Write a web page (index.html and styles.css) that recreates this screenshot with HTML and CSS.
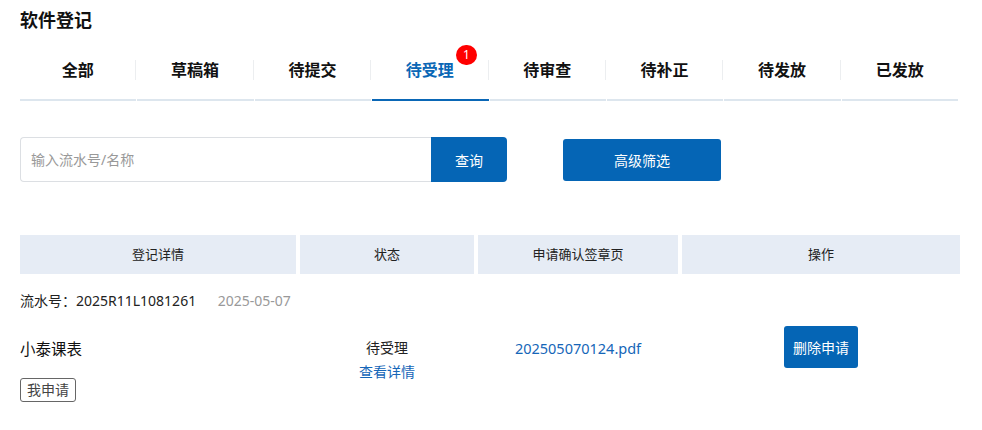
FILE: index.html
```html
<!DOCTYPE html>
<html lang="zh-CN">
  <head>
    <meta charset="UTF-8" />
    <meta name="viewport" content="width=device-width, initial-scale=1.0" />
    <title>软件登记</title>
    <link rel="stylesheet" href="styles.css">
  </head>
  <body>
    <div class="main">
      <h1 class="title">软件登记</h1>

      <div class="tabs">
        <div class="tab"><span class="tab-label">全部</span></div>
        <div class="tab"><span class="tab-label">草稿箱</span></div>
        <div class="tab"><span class="tab-label">待提交</span></div>
        <div class="tab active">
          <span class="tab-label"><span class="tab-text">待受理<span class="badge">1</span></span></span>
        </div>
        <div class="tab"><span class="tab-label">待审查</span></div>
        <div class="tab"><span class="tab-label">待补正</span></div>
        <div class="tab"><span class="tab-label">待发放</span></div>
        <div class="tab last"><span class="tab-label">已发放</span></div>
      </div>

      <div class="search-bar">
        <div class="search">
          <input class="search-input" type="text" placeholder="输入流水号/名称" />
          <button class="search-button">查询</button>
        </div>
        <button class="filter-button">高级筛选</button>
      </div>

      <div class="table-head">
        <div class="head-cell">登记详情</div>
        <div class="head-cell">状态</div>
        <div class="head-cell">申请确认签章页</div>
        <div class="head-cell">操作</div>
      </div>

      <div class="record">
        <div class="record-meta">
          <span>流水号：2025R11L1081261</span>
          <span class="record-date">2025-05-07</span>
        </div>
        <div class="record-body">
          <div class="cell cell-detail">
            <div class="record-name">小泰课表</div>
            <span class="tag">我申请</span>
          </div>
          <div class="cell cell-status">
            <div>待受理</div>
            <a class="link" href="#">查看详情</a>
          </div>
          <div class="cell cell-file">
            <a class="link" href="#">202505070124.pdf</a>
          </div>
          <div class="cell cell-action">
            <button class="delete-button">删除申请</button>
          </div>
        </div>
      </div>
    </div>
  </body>
</html>
```

FILE: styles.css
```css
body {
  margin: 0;
  font-family: "Noto Sans", "Noto Sans CJK SC", sans-serif;
  color: #333;
  background: #fff;
}

.main {
  padding: 8px 22px 0 20px;
}

.title {
  margin: 0;
  font-size: 18px;
  line-height: 24px;
  font-weight: bold;
  color: #111;
}

/* tabs */
.tabs {
  display: flex;
  width: 938px;
  margin-top: 12px;
}

.tab {
  flex: 1;
  padding: 16px 0 19px 0;
  border-bottom: 2px solid #dde6ee;
  margin-right: 1px;
}

.tab.last {
  margin-right: 0;
}

.tab-label {
  display: block;
  text-align: center;
  font-size: 16px;
  font-weight: bold;
  line-height: 20px;
  color: #111;
  border-right: 1px solid #eceef0;
}

.tab.last .tab-label {
  border-right: none;
}

.tab.active {
  border-bottom-color: #0a67b6;
}

.tab.active .tab-label {
  color: #0a67b6;
}

.tab-text {
  position: relative;
}

.badge {
  position: absolute;
  left: 100%;
  top: -14px;
  margin-left: 2px;
  width: 21px;
  height: 20px;
  border-radius: 10px;
  background: #f00;
  color: #fff;
  font-size: 12px;
  font-weight: normal;
  line-height: 20px;
  text-align: center;
}

/* search */
.search-bar {
  display: flex;
  align-items: center;
  margin-top: 36px;
}

.search {
  display: flex;
}

.search-input {
  width: 411px;
  height: 45px;
  box-sizing: border-box;
  border: 1px solid #dcdfe3;
  border-right: none;
  border-radius: 4px 0 0 4px;
  padding: 0 10px;
  font-family: inherit;
  font-size: 14px;
  color: #333;
  outline: none;
}

.search-input::placeholder {
  color: #999;
}

.search-button {
  width: 76px;
  height: 45px;
  border: none;
  border-radius: 0 4px 4px 0;
  background: #0565b5;
  color: #fff;
  font-family: inherit;
  font-size: 14px;
}

.filter-button {
  margin-left: 56px;
  width: 158px;
  height: 42px;
  border: none;
  border-radius: 3px;
  background: #0565b5;
  color: #fff;
  font-family: inherit;
  font-size: 14px;
}

/* table */
.table-head,
.record-body {
  display: grid;
  grid-template-columns: 276px 174px 200px 278px;
  column-gap: 4px;
}

.table-head {
  margin-top: 53px;
}

.head-cell {
  height: 39px;
  line-height: 39px;
  text-align: center;
  background: #e6ecf5;
  font-size: 13px;
  color: #222;
}

.record-meta {
  margin-top: 18px;
  font-size: 14px;
  line-height: 18px;
  color: #222;
}

.record-date {
  margin-left: 18px;
  color: #999;
}

.cell {
  font-size: 14px;
  line-height: 24px;
}

.cell-detail {
  padding-top: 28px;
}

.record-name {
  font-size: 15.5px;
  line-height: 22px;
  color: #111;
}

.tag {
  display: inline-block;
  margin-top: 18px;
  padding: 0 6px;
  height: 22px;
  line-height: 22px;
  border: 1px solid #666;
  border-radius: 3px;
  font-size: 14px;
  color: #444;
}

.cell-status {
  padding-top: 26px;
  text-align: center;
  color: #222;
}

.cell-file {
  padding-top: 26px;
  text-align: center;
}

.link {
  color: #1566b8;
  text-decoration: none;
}

.cell-file .link {
  font-size: 14.5px;
}

.cell-action {
  padding-top: 16px;
  text-align: center;
}

.delete-button {
  width: 74px;
  height: 42px;
  border: none;
  border-radius: 3px;
  background: #0565b5;
  color: #fff;
  font-family: inherit;
  font-size: 14px;
}
```
